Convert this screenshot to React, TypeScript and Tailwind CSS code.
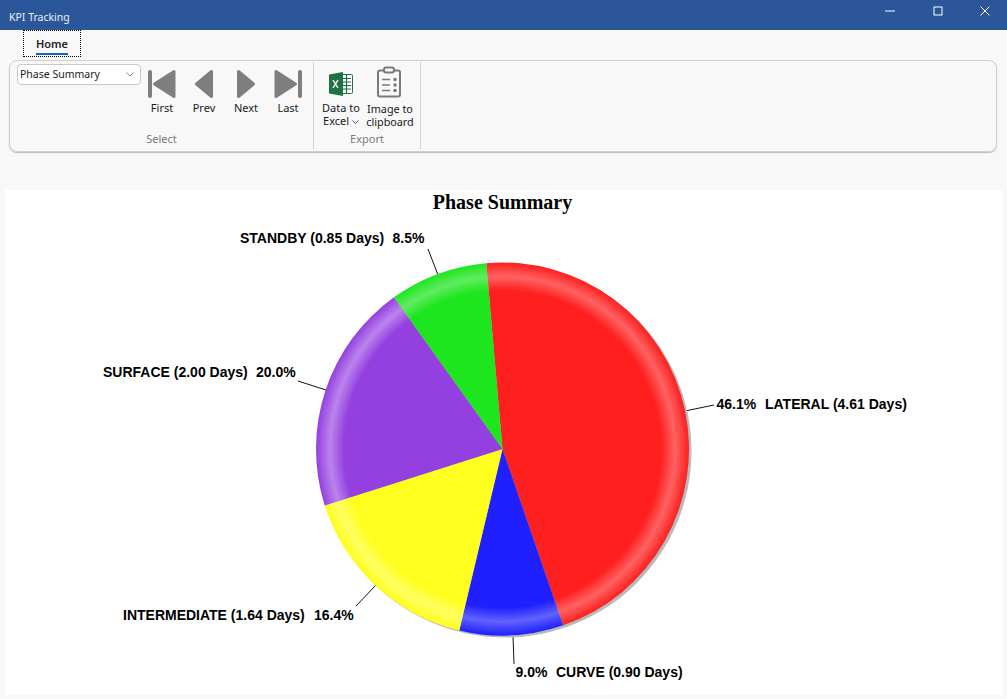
import React from "react"

const CX = 502.5
const CY = 449
const R = 186.5

interface Slice {
  id: string
  start: number
  end: number
  base: string
  light: string
}

const slices: Slice[] = [
  { id: "red", start: -5, end: 161, base: "#ff1f1f", light: "#ff6262" },
  { id: "blue", start: 161, end: 193.4, base: "#1f1fff", light: "#6262ff" },
  { id: "yellow", start: 193.4, end: 252.4, base: "#ffff1f", light: "#ffff62" },
  { id: "purple", start: 252.4, end: 324.4, base: "#9440e0", light: "#ba84ec" },
  { id: "green", start: 324.4, end: 355, base: "#1ee61e", light: "#60ec60" },
]

const labels = [
  { y: 243, parts: [{ x: 240, text: "STANDBY (0.85 Days)" }, { x: 392.5, text: "8.5%" }] },
  { y: 377, parts: [{ x: 103, text: "SURFACE (2.00 Days)" }, { x: 256, text: "20.0%" }] },
  { y: 409, parts: [{ x: 716.5, text: "46.1%" }, { x: 765, text: "LATERAL (4.61 Days)" }] },
  { y: 677, parts: [{ x: 515.5, text: "9.0%" }, { x: 556, text: "CURVE (0.90 Days)" }] },
  { y: 620, parts: [{ x: 123, text: "INTERMEDIATE (1.64 Days)" }, { x: 314, text: "16.4%" }] },
]

const leaders = [
  [428, 249, 438, 275],
  [298, 381, 326, 390],
  [685, 411, 714, 405],
  [513, 636, 514, 664],
  [376, 585, 356, 606],
]

const point = (deg: number) => {
  const a = (deg * Math.PI) / 180
  return `${CX + R * Math.sin(a)} ${CY - R * Math.cos(a)}`
}

const slicePath = (s: Slice) =>
  `M${CX} ${CY} L${point(s.start)} A${R} ${R} 0 ${s.end - s.start > 180 ? 1 : 0} 1 ${point(s.end)} Z`

const PieChart = () => (
  <svg viewBox="5 190 997 505" className="block w-full h-full">
    <defs>
      {slices.map((s) => (
        <radialGradient key={s.id} id={s.id} gradientUnits="userSpaceOnUse" cx={CX} cy={CY} r={R}>
          <stop offset="0.85" stopColor={s.base} />
          <stop offset="0.925" stopColor={s.light} />
          <stop offset="1" stopColor={s.base} />
        </radialGradient>
      ))}
    </defs>
    <text x={CX} y={209} textAnchor="middle" className="font-['Liberation_Serif',serif] font-bold text-[20px]" fill="#000">
      Phase Summary
    </text>
    {leaders.map(([x1, y1, x2, y2], i) => (
      <line key={i} x1={x1} y1={y1} x2={x2} y2={y2} stroke="#111" strokeWidth="1" />
    ))}
    <circle cx={CX + 2.5} cy={CY + 2} r={R} fill="#b9b9b9" />
    {slices.map((s) => (
      <path key={s.id} d={slicePath(s)} fill={`url(#${s.id})`} />
    ))}
    {labels.map((l) => (
      <text key={l.parts[0].text} y={l.y} fill="#000" className="font-['Liberation_Sans',sans-serif] font-bold text-[14px]">
        {l.parts.map((p) => (
          <tspan key={p.text} x={p.x}>{p.text}</tspan>
        ))}
      </text>
    ))}
  </svg>
)

const NavIcon = ({ kind }: { kind: "first" | "prev" | "next" | "last" }) => (
  <svg width="30" height="30" viewBox="0 0 30 30" fill="#7f7f7f" stroke="#7f7f7f" strokeLinejoin="round" className="block">
    {kind === "first" && (
      <>
        <rect x="1.5" y="1.5" width="3" height="27" rx="1" strokeWidth="1" />
        <path d="M7.5 15 L27 2.5 V27.5 Z" strokeWidth="3" />
      </>
    )}
    {kind === "prev" && <path d="M7.5 15 L22.5 2.5 V27.5 Z" strokeWidth="3" />}
    {kind === "next" && <path d="M22.5 15 L7.5 2.5 V27.5 Z" strokeWidth="3" />}
    {kind === "last" && (
      <>
        <rect x="25.5" y="1.5" width="3" height="27" rx="1" strokeWidth="1" />
        <path d="M22.5 15 L3 2.5 V27.5 Z" strokeWidth="3" />
      </>
    )}
  </svg>
)

const ExcelIcon = () => (
  <svg width="26" height="26" viewBox="0 0 26 26" className="block">
    <rect x="9" y="3.5" width="15.5" height="19" rx="1" fill="#fff" stroke="#1f7244" />
    <path d="M15 7.5h8M15 11h8M15 14.5h8M15 18h8M18.5 4v18" stroke="#1f7244" strokeWidth="1.2" />
    <path d="M1 3.5 L15 1 V25 L1 22.5 Z" fill="#1f7244" />
    <path d="M5 9 L10 17 M10 9 L5 17" stroke="#fff" strokeWidth="1.4" />
  </svg>
)

const ClipboardIcon = () => (
  <svg width="26" height="32" viewBox="0 0 26 32" fill="none" stroke="#7a7a7a" className="block">
    <rect x="2" y="4.5" width="22" height="26" rx="2" strokeWidth="2" />
    <rect x="8" y="1.5" width="10" height="5" rx="2" fill="#f8f8f8" strokeWidth="2" />
    <path d="M6 13.5h8M6 19h8M6 24.5h8" strokeWidth="1.6" />
    <circle cx="19" cy="13.5" r="1.8" fill="#7a7a7a" stroke="none" />
    <circle cx="19" cy="19" r="1.8" fill="#7a7a7a" stroke="none" />
    <circle cx="19" cy="24.5" r="1.8" fill="#7a7a7a" stroke="none" />
  </svg>
)

const navButtons = [
  { kind: "first", label: "First" },
  { kind: "prev", label: "Prev" },
  { kind: "next", label: "Next" },
  { kind: "last", label: "Last" },
] as const

export default function App() {
  return (
    <div className="w-[1007px] h-[699px] overflow-hidden flex flex-col bg-[#f8f8f8] font-['Noto_Sans',sans-serif] text-[11px] text-[#1a1a1a]">
      <div className="h-[30px] shrink-0 bg-[#2b579a] flex items-center text-white">
        <span className="pl-[9px] pt-[6px] flex-1 text-[10.5px] text-[#e8eef7]">KPI Tracking</span>
        <div className="flex items-center self-start h-[21px]">
          <svg width="12" height="12" viewBox="0 0 12 12" className="mr-[35.5px]"><path d="M1 6h10" stroke="#fff" strokeWidth="1" /></svg>
          <svg width="12" height="12" viewBox="0 0 12 12" className="mr-[35px]"><rect x="2" y="2" width="8" height="8" fill="none" stroke="#fff" strokeWidth="1" /></svg>
          <svg width="12" height="12" viewBox="0 0 12 12" className="mr-[16.5px]"><path d="M1.5 1.5l9 9M10.5 1.5l-9 9" stroke="#fff" strokeWidth="1" /></svg>
        </div>
      </div>

      <div className="h-[30px] shrink-0 flex items-start pl-[23px]">
        <div className="relative w-[58px] h-[27px] border border-dotted border-black flex items-center justify-center pt-[2px] font-semibold text-[11px] text-[#222]">
          Home
          <span className="absolute left-[12px] bottom-[1px] w-[32px] h-[2px] bg-[#1464c8]" />
        </div>
      </div>

      <div className="ml-[9px] mr-[10px] h-[92px] shrink-0 flex rounded-lg border border-[#cfcfcf] shadow-[0_1px_1px_#bbb]">
        <div className="w-[304px] h-[87px] mt-[1px] border-r border-[#d4d4d4] flex flex-col">
          <div className="flex h-[72px] pl-[7px] pt-[2px]">
            <div className="w-[124px] h-[21px] rounded-[4px] border border-[#c8c8c8] bg-white flex items-center justify-between pl-[2px] pr-[6px]">
              <span className="text-[10.5px]">Phase Summary</span>
              <svg width="8" height="5" viewBox="0 0 8 5"><path d="M0.5 0.5L4 4l3.5-3.5" fill="none" stroke="#888" /></svg>
            </div>
            {navButtons.map((b) => (
              <div key={b.kind} className="w-[42px] flex flex-col items-center pt-[5px]">
                <NavIcon kind={b.kind} />
                <span className="mt-[1px] leading-[15px]">{b.label}</span>
              </div>
            ))}
          </div>
          <div className="text-center text-[#7a7a7a] leading-[15px] mt-[-3px]">Select</div>
        </div>
        <div className="w-[107px] h-[87px] mt-[1px] border-r border-[#d4d4d4] flex flex-col">
          <div className="flex h-[72px] pl-[3px] pt-[4px]">
            <div className="w-[48px] flex flex-col items-center">
              <div className="h-[31px] flex items-end"><ExcelIcon /></div>
              <span className="mt-[4px] leading-[13px] text-center">Data to<br />Excel <span className="inline-block align-middle"><svg width="7" height="5" viewBox="0 0 7 5"><path d="M0.5 0.5L3.5 3.5l3-3" fill="none" stroke="#555" /></svg></span></span>
            </div>
            <div className="w-[50px] flex flex-col items-center">
              <div className="-translate-x-px"><ClipboardIcon /></div>
              <span className="mt-[4px] leading-[13px] text-center text-[10.8px]">Image to<br />clipboard</span>
            </div>
          </div>
          <div className="text-center text-[#7a7a7a] leading-[15px] mt-[-3px]">Export</div>
        </div>
      </div>

      <div className="mt-[38px] mx-[5px] h-[505px] shrink-0 bg-white">
        <PieChart />
      </div>
    </div>
  )
}
